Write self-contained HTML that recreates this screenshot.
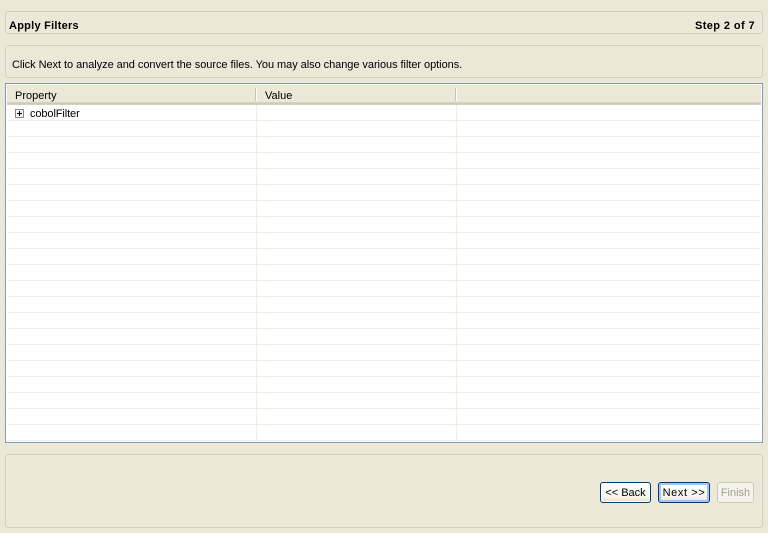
<!DOCTYPE html>
<html><head><meta charset="utf-8"><style>
html,body{margin:0;padding:0;width:768px;height:533px;overflow:hidden;background:#ebe8d8}
body{position:relative;font-family:"Liberation Sans","DejaVu Sans",sans-serif;font-size:11px;color:#000}
div{position:absolute;box-sizing:border-box}
.p{left:5px;width:758px;border:1px solid #d2d0bf;border-radius:3px}
.t{white-space:nowrap;line-height:14px}
.b{border-radius:3px;text-align:center;line-height:21px;background:linear-gradient(#fff,#f3f2ea 80%,#dcd8c8)}
</style></head><body>
<div class="p" style="top:11px;height:23px"></div>
<div class="t" style="left:9px;top:19px;font-weight:bold;letter-spacing:.25px">Apply Filters</div>
<div class="t" style="right:13px;top:19px;font-weight:bold;letter-spacing:.4px">Step 2 of 7</div>
<div class="p" style="top:45px;height:33px"></div>
<div class="t" style="left:12px;top:58px;letter-spacing:-.05px">Click Next to analyze and convert the source files. You may also change various filter options.</div>
<div style="left:5px;top:83px;width:758px;height:360px;background:#fff;border:1px solid #7f9db9"></div>
<div style="left:7px;top:85px;width:754px;height:20px;background:linear-gradient(to bottom,#ebe8d8 0,#ebe8d8 17px,#d8d5c5 17px,#cbc7b8 19px,#dedbcc 20px)"></div>
<div style="left:255px;top:88px;width:1px;height:13px;background:#c7c5b2"></div>
<div style="left:256px;top:88px;width:1px;height:13px;background:#fff"></div>
<div style="left:455px;top:88px;width:1px;height:13px;background:#c7c5b2"></div>
<div style="left:456px;top:88px;width:1px;height:13px;background:#fff"></div>
<div class="t" style="left:15px;top:89px">Property</div>
<div class="t" style="left:265px;top:89px">Value</div>
<div style="left:7px;top:105px;width:754px;height:336px;background:repeating-linear-gradient(to bottom,#fff 0,#fff 15px,#f0efe3 15px,#f0efe3 16px)"></div>
<div style="left:256px;top:105px;width:1px;height:336px;background:#f0efe3"></div>
<div style="left:456px;top:105px;width:1px;height:336px;background:#f0efe3"></div>
<svg style="position:absolute;left:15px;top:109px" width="9" height="9"><rect x=".5" y=".5" width="8" height="8" fill="#f4f3ec" stroke="#7b8a99"/><path d="M2 4.5H7M4.5 2V7" stroke="#000"/></svg>
<div class="t" style="left:30px;top:107px;letter-spacing:-.1px">cobolFilter</div>
<div class="p" style="top:454px;height:74px"></div>
<div class="b" style="left:600px;top:482px;width:51px;height:21px;border:1px solid #003c74;box-shadow:inset 0 0 0 1px #fff">&lt;&lt; Back</div>
<div class="b" style="left:658px;top:482px;width:52px;height:21px;border:1px solid #003c74;box-shadow:inset 0 0 0 2px #a9c4ea;letter-spacing:.6px">Next &gt;&gt;</div>
<div class="b" style="left:717px;top:482px;width:37px;height:21px;border:1px solid #cdcbbb;background:#f4f3ec;color:#a1a192">Finish</div>
</body></html>
